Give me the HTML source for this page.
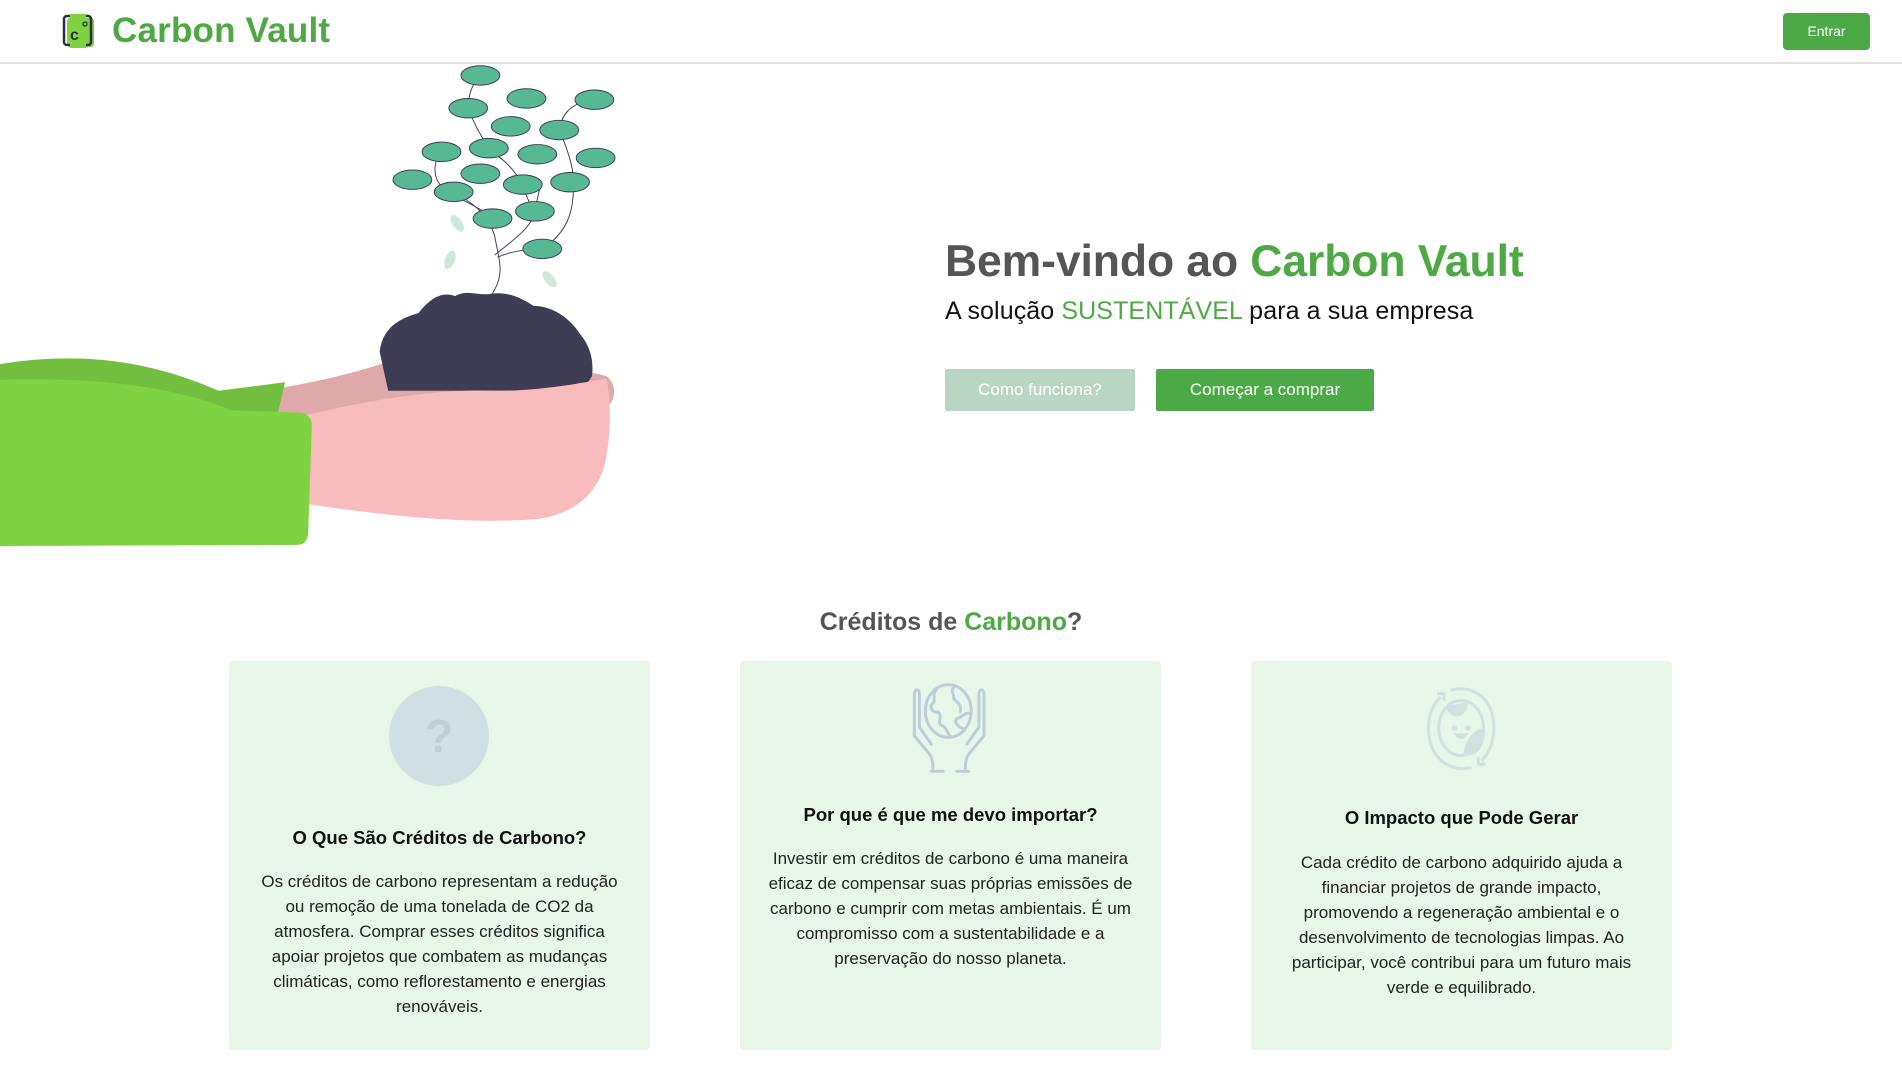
<!DOCTYPE html>
<html><head><meta charset="utf-8"><style>
*{margin:0;padding:0;box-sizing:border-box}
body{width:1902px;height:1080px;overflow:hidden;background:#fff;font-family:"Liberation Sans",sans-serif;position:relative}
.abs{position:absolute}
.hdr{left:0;top:0;width:1902px;height:64px;border-bottom:2px solid #e2e2e2}
.logo{left:112px;top:11px;font-size:35px;font-weight:bold;color:#4ea843;letter-spacing:0.2px}
.entrar{left:1783px;top:13px;width:87px;height:37px;background:#4caa46;border-radius:4px;color:#fff;font-size:14px;text-align:center;line-height:37px}
h1{position:absolute;left:945px;top:237px;font-size:44.5px;color:#555;font-weight:bold;letter-spacing:-0.1px;white-space:nowrap}
.g{color:#4ea843}
.sub{left:945px;top:297px;font-size:25px;color:#111;white-space:nowrap;letter-spacing:0.1px}
.b1{left:945px;top:369px;width:190px;height:42px;background:#b8d6c3;color:#fff;font-size:17px;text-align:center;line-height:42px;border-radius:2px}
.b2{left:1156px;top:369px;width:218px;height:42px;background:#4caa46;color:#fff;font-size:17px;text-align:center;line-height:42px;border-radius:2px}
.st{left:0;width:1902px;top:608px;text-align:center;font-size:25px;font-weight:bold;color:#555}
.card{top:661px;width:421px;height:389px;background:#e8f5e9;border-radius:4px}
.ct{position:absolute;left:0;width:100%;text-align:center;font-size:18.5px;font-weight:bold;color:#111}
.cp{position:absolute;left:22px;right:22px;text-align:center;font-size:17px;line-height:25px;color:#222}
</style></head><body>
<svg class="abs" style="left:0;top:0" width="1902" height="1080" viewBox="0 0 1568 890">
<path d="M150 330 C200 325 260 318 320 298 L330 330 L240 345 Z" fill="#e0a9a9"/>
<path d="M300 305 C360 300 470 300 500 310 C512 320 505 335 495 340 L300 340 Z" fill="#e0a9a9"/>
<path d="M313 290 C315 270 330 262 345 258 C355 245 365 240 375 244 C385 238 395 244 405 242 C420 240 430 246 440 252 C455 252 470 262 478 275 C485 283 490 295 488 310 L480 322 L320 322 Z" fill="#3f3d56"/>
<path d="M240 345 C300 330 360 320 410 322 C450 322 480 315 500 312 C504 330 504 360 498 385 C490 410 470 425 440 428 C380 432 320 425 250 415 Z" fill="#f8bcbc"/>
<path d="M0 300 C60 290 120 295 180 322 L235 315 L228 345 L0 345 Z" fill="#72bf3f"/>
<path d="M0 313 C80 310 150 320 190 338 L248 340 C256 342 257 346 257 352 L254 440 C253 447 250 449 245 449 L0 450 Z" fill="#7fd343"/>
<g fill="none" stroke="#3f3d56" stroke-width="0.8">
<path d="M405 243 C418 225 410 210 408 195 C405 185 400 175 385 165 C380 160 375 155 368 150"/>
<path d="M408 210 C420 200 435 190 440 178 L446 150"/>
<path d="M410 212 C425 205 445 205 447 205 C470 190 475 170 472 140 C468 120 462 112 462 107 C462 95 470 85 488 82"/>
<path d="M400 122 C415 130 425 140 430 152 L440 175"/>
<path d="M386 89 C390 100 395 110 402 120 M396 62 C388 70 386 80 386 89"/>
<path d="M364 125 C356 135 356 150 370 158 C380 165 395 170 406 180"/>
</g>
<g fill="#57b894" stroke="#3f3d56" stroke-width="0.8">
<ellipse cx="396" cy="62" rx="16" ry="8"/><ellipse cx="434" cy="81" rx="16" ry="8"/><ellipse cx="490" cy="82" rx="16" ry="8"/>
<ellipse cx="386" cy="89" rx="16" ry="8"/><ellipse cx="421" cy="104" rx="16" ry="8"/><ellipse cx="461" cy="107" rx="16" ry="8"/>
<ellipse cx="364" cy="125" rx="16" ry="8"/><ellipse cx="403" cy="122" rx="16" ry="8"/><ellipse cx="443" cy="127" rx="16" ry="8"/>
<ellipse cx="491" cy="130" rx="16" ry="8"/><ellipse cx="340" cy="148" rx="16" ry="8"/><ellipse cx="396" cy="143" rx="16" ry="8"/>
<ellipse cx="431" cy="152" rx="16" ry="8"/><ellipse cx="470" cy="150" rx="16" ry="8"/><ellipse cx="374" cy="158" rx="16" ry="8"/>
<ellipse cx="406" cy="180" rx="16" ry="8"/><ellipse cx="441" cy="174" rx="16" ry="8"/><ellipse cx="447" cy="205" rx="16" ry="8"/>
</g>
<g fill="#cfe8dc"><ellipse cx="377" cy="184" rx="4" ry="8" transform="rotate(-35 377 184)"/><ellipse cx="371" cy="214" rx="4" ry="8" transform="rotate(20 371 214)"/><ellipse cx="453" cy="230" rx="4" ry="8" transform="rotate(-40 453 230)"/></g>
</svg>
<div class="abs hdr"></div>
<svg class="abs" style="left:62px;top:14px" width="34" height="36" viewBox="0 0 34 36">
<rect x="5" y="4" width="27" height="29" rx="3" fill="#7fd343"/>
<rect x="2" y="2" width="27" height="29" rx="3" fill="none" stroke="#2d2d45" stroke-width="2.5"/>
<rect x="8" y="-1" width="16" height="5" fill="#7fd343"/><rect x="8" y="29" width="16" height="5" fill="#7fd343"/>
<text x="8" y="26" font-family="Liberation Sans" font-weight="bold" font-size="16" fill="#2d2d45">c</text>
<circle cx="23" cy="10" r="2" fill="none" stroke="#2d2d45" stroke-width="1.3"/>
</svg>
<div class="abs logo">Carbon Vault</div>
<div class="abs entrar">Entrar</div>
<h1>Bem-vindo ao <span class="g">Carbon Vault</span></h1>
<div class="abs sub">A solução <span class="g">SUSTENTÁVEL</span> para a sua empresa</div>
<div class="abs b1">Como funciona?</div>
<div class="abs b2">Começar a comprar</div>
<div class="abs st">Créditos de <span class="g">Carbono</span>?</div>

<div class="abs card" style="left:229px">
<svg class="abs" style="left:160px;top:25px" width="100" height="100"><circle cx="50" cy="50" r="50" fill="#d0dfe1"/><text x="50" y="66" text-anchor="middle" font-family="Liberation Sans" font-weight="bold" font-size="46" fill="#bfcfd6">?</text></svg>
<div class="ct" style="top:166px">O Que São Créditos de Carbono?</div>
<div class="cp" style="top:208px">Os créditos de carbono representam a redução ou remoção de uma tonelada de CO2 da atmosfera. Comprar esses créditos significa apoiar projetos que combatem as mudanças climáticas, como reflorestamento e energias renováveis.</div>
</div>
<div class="abs card" style="left:740px">
<svg class="abs" style="left:170px;top:22px" width="80" height="90" viewBox="0 0 92 106" fill="none" stroke="#bccfd8" stroke-width="3.5" stroke-linejoin="round" stroke-linecap="round">
<ellipse cx="44" cy="33" rx="27" ry="31"/>
<path d="M30 8 C24 14 30 20 26 24 C20 28 26 36 32 34 C38 40 30 46 36 50 C42 52 42 58 46 62 M50 6 C46 10 52 14 50 18 C56 24 60 26 58 34 M70 36 C64 34 60 40 54 42 C50 46 56 52 62 54"/>
<path d="M4 14 V62 L22 84 C26 90 26 98 26 104 M10 52 L24 72"/>
<path d="M86 14 V62 L68 84 C64 90 64 98 64 104 M80 52 L66 72"/>
<path d="M4 14 C4 6 10 6 10 14 V52 M86 14 C86 6 80 6 80 14 V52"/>
<path d="M24 104 H38 M54 104 H68"/>
</svg>
<div class="ct" style="top:143px">Por que é que me devo importar?</div>
<div class="cp" style="top:185px">Investir em créditos de carbono é uma maneira eficaz de compensar suas próprias emissões de carbono e cumprir com metas ambientais. É um compromisso com a sustentabilidade e a preservação do nosso planeta.</div>
</div>
<div class="abs card" style="left:1251px">
<svg class="abs" style="left:172px;top:24px" width="78" height="86" viewBox="0 0 86 100" fill="none" stroke="#d2e0e0" stroke-width="3.5">
<path d="M30 6 C50 0 80 10 80 50 C80 66 74 80 66 88 M54 96 C30 102 4 86 4 50 C4 34 10 22 18 14"/>
<path d="M14 10 H22 V18 M62 84 V92 H70"/>
<ellipse cx="42" cy="50" rx="26" ry="32" />
<path d="M26 26 C30 38 46 38 48 22 Z M68 52 C56 54 50 64 46 80 C60 82 68 70 68 52Z" fill="#d2e0e0"/>
<circle cx="34" cy="50" r="1.5" fill="#d2e0e0"/><circle cx="50" cy="50" r="1.5" fill="#d2e0e0"/>
<path d="M37 58 Q42 64 47 58Z" fill="#d2e0e0"/>
</svg>
<div class="ct" style="top:146px">O Impacto que Pode Gerar</div>
<div class="cp" style="top:189px">Cada crédito de carbono adquirido ajuda a financiar projetos de grande impacto, promovendo a regeneração ambiental e o desenvolvimento de tecnologias limpas. Ao participar, você contribui para um futuro mais verde e equilibrado.</div>
</div>
</body></html>
